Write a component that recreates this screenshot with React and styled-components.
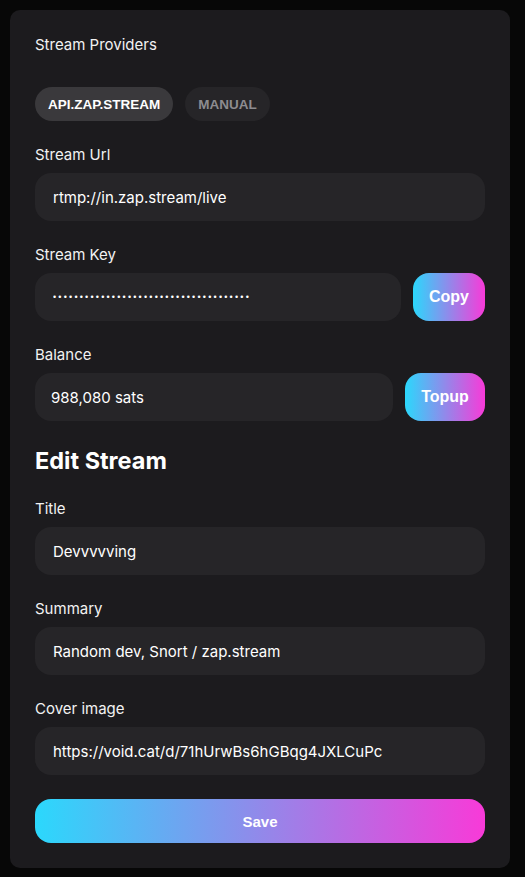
import React from 'react'
import styled, { createGlobalStyle } from 'styled-components'

const GlobalStyle = createGlobalStyle`
  * { box-sizing: border-box; }
  body {
    margin: 0;
    background: #070707;
    font-family: Inter, "Noto Sans", sans-serif;
    color: #fff;
  }
`

const Page = styled.div`
  min-height: 877px;
  padding: 10px 15px 9px 10px;
`

const Modal = styled.div`
  width: 500px;
  background: #1c1b1e;
  border-radius: 10px;
  padding: 25px;
  display: flex;
  flex-direction: column;
`

const Label = styled.div`
  font-size: 15px;
  line-height: 20px;
  color: #f2f2f2;
  margin-bottom: 8px;
`

const Tabs = styled.div`
  display: flex;
  gap: 12px;
  margin-top: 24px;
  margin-bottom: 24px;
`

const Tab = styled.button`
  height: 34px;
  padding: 0 13px;
  border: none;
  border-radius: 17px;
  font-family: "Liberation Sans", Arial, sans-serif;
  font-weight: 700;
  font-size: 13.5px;
  background: ${p => (p.$active ? '#3a393c' : '#262528')};
  color: ${p => (p.$active ? '#fff' : '#8d8c90')};
`

const Group = styled.div`
  display: flex;
  flex-direction: column;
  margin-bottom: 24px;
`

const Row = styled.div`
  display: flex;
  gap: 12px;
`

const Field = styled.input`
  flex: 1 1 auto;
  width: 100%;
  min-width: 0;
  height: 48px;
  border: none;
  outline: none;
  border-radius: 16px;
  background: #262528;
  color: #fff;
  font-family: ${p => (p.$secret ? '"Liberation Sans", Arial, sans-serif' : 'Inter, "Noto Sans", sans-serif')};
  font-size: ${p => (p.$secret ? 9 : 15)}px;
  letter-spacing: ${p => (p.$secret ? '2.2px' : 'normal')};
  padding: 0 ${p => p.$pad || 18}px;
`

const GradientButton = styled.button`
  flex: none;
  border: none;
  color: #fff;
  font-family: "Liberation Sans", Arial, sans-serif;
  font-weight: 700;
  background: linear-gradient(90deg, #2bd8fc, #f83ad8);
  height: ${p => (p.$wide ? 44 : 48)}px;
  width: ${p => (p.$w ? `${p.$w}px` : '100%')};
  border-radius: 16px;
  font-size: ${p => (p.$wide ? 15 : 16)}px;
`

const Heading = styled.h2`
  margin: 2px 0 24px;
  font-size: 23.5px;
  line-height: 28px;
  font-weight: 700;
`

function App() {
  return (
    <Page>
      <GlobalStyle />
      <Modal>
        <Label>Stream Providers</Label>
        <Tabs>
          <Tab $active>API.ZAP.STREAM</Tab>
          <Tab>MANUAL</Tab>
        </Tabs>
        <Group>
          <Label>Stream Url</Label>
          <Field readOnly value="rtmp://in.zap.stream/live" />
        </Group>
        <Group>
          <Label>Stream Key</Label>
          <Row>
            <Field readOnly $secret type="password" value="0123456789abcdef0123456789abcdef01234" />
            <GradientButton $w={72}>Copy</GradientButton>
          </Row>
        </Group>
        <Group>
          <Label>Balance</Label>
          <Row>
            <Field readOnly $pad={16} value="988,080 sats" />
            <GradientButton $w={80}>Topup</GradientButton>
          </Row>
        </Group>
        <Heading>Edit Stream</Heading>
        <Group>
          <Label>Title</Label>
          <Field readOnly value="Devvvvving" />
        </Group>
        <Group>
          <Label>Summary</Label>
          <Field readOnly value="Random dev, Snort / zap.stream" />
        </Group>
        <Group>
          <Label>Cover image</Label>
          <Field readOnly value="https://void.cat/d/71hUrwBs6hGBqg4JXLCuPc" />
        </Group>
        <GradientButton $wide>Save</GradientButton>
      </Modal>
    </Page>
  )
}

export default App
